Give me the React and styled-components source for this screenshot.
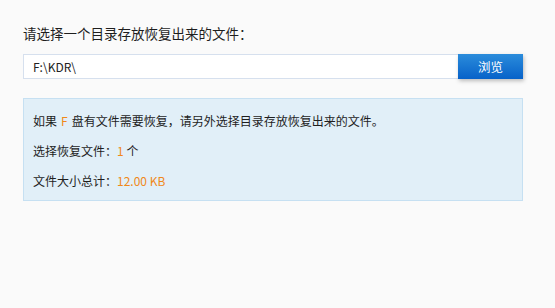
import React from 'react';
import styled, { createGlobalStyle } from 'styled-components';

const GlobalStyle = createGlobalStyle`
  html, body {
    margin: 0;
    padding: 0;
    background: #fafafa;
  }
  body {
    font-family: "Noto Sans CJK SC", "Noto Sans", sans-serif;
    color: #333;
  }
`;

const Page = styled.div`
  width: 555px;
  height: 308px;
  box-sizing: border-box;
  padding: 23px 32px 0 23px;
`;

const Title = styled.div`
  font-size: 13.5px;
  line-height: 20px;
  color: #1e1e1e;
`;

const PathRow = styled.div`
  display: flex;
  margin-top: 11px;
  height: 25px;
`;

const PathInput = styled.input`
  flex: 1;
  min-width: 0;
  box-sizing: border-box;
  height: 25px;
  border: 1px solid #d6e0ee;
  border-right: none;
  background: #fff;
  padding: 0 9px;
  font-family: "Noto Sans CJK SC", "Noto Sans", sans-serif;
  font-size: 12px;
  color: #222;
  outline: none;
`;

const BrowseButton = styled.button`
  width: 65px;
  height: 25px;
  border: none;
  padding: 0;
  background: linear-gradient(#2b8cdb, #0762c9);
  color: #fff;
  font-family: "Noto Sans CJK SC", "Noto Sans", sans-serif;
  font-size: 12.5px;
  box-shadow: 1px 2px 4px rgba(0, 0, 0, 0.25);
  cursor: pointer;
`;

const InfoBox = styled.div`
  margin-top: 19px;
  box-sizing: border-box;
  height: 103px;
  background: #e1eff8;
  border: 1px solid #c6e0f2;
  padding: 7px 9px 0;
`;

const InfoLine = styled.div`
  font-size: 12px;
  line-height: 30px;
  color: #1e1e1e;
`;

const Accent = styled.span`
  color: #f0891a;
  margin: ${(p) => (p.spaced ? '0 4px' : '0')};
`;

export default function App() {
  return (
    <>
      <GlobalStyle />
      <Page>
        <Title>请选择一个目录存放恢复出来的文件：</Title>
        <PathRow>
          <PathInput defaultValue="F:\KDR\" />
          <BrowseButton>浏览</BrowseButton>
        </PathRow>
        <InfoBox>
          <InfoLine>
            如果<Accent spaced>F</Accent>盘有文件需要恢复，请另外选择目录存放恢复出来的文件。
          </InfoLine>
          <InfoLine>
            选择恢复文件：<Accent>1</Accent> 个
          </InfoLine>
          <InfoLine>
            文件大小总计：<Accent>12.00 KB</Accent>
          </InfoLine>
        </InfoBox>
      </Page>
    </>
  );
}
